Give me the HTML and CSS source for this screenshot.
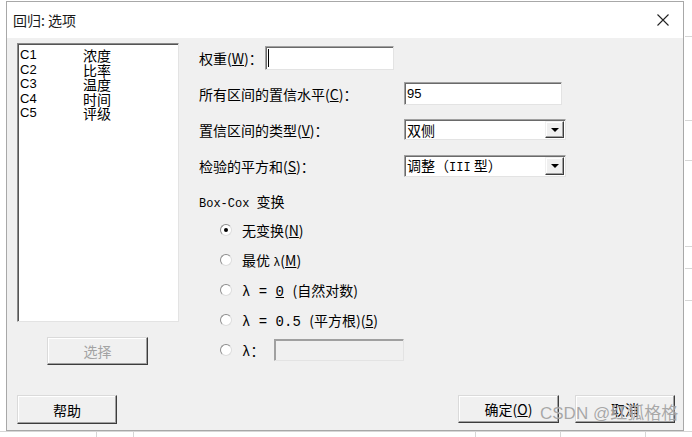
FILE: index.html
```html
<!DOCTYPE html>
<html lang="zh">
<head>
<meta charset="utf-8">
<title>回归: 选项</title>
<link rel="stylesheet" href="styles.css">
</head>
<body>
<div class="desk">
  <span class="hl hl-bottom"></span>
  <span class="vl vl-a"></span>
  <span class="vl vl-b"></span>
  <span class="vl vl-c"></span>
  <span class="vl vl-d"></span>
  <span class="vl vl-e"></span>
  <span class="rl rl-1"></span>
  <span class="rl rl-2"></span>
  <span class="rl rl-3"></span>
  <span class="rl rl-4"></span>
  <span class="rl rl-5"></span>
  <span class="rl rl-6"></span>
</div>
<div class="dialog">
  <div class="titlebar">
    <span class="title">回归: 选项</span>
    <svg class="close" width="12" height="12" viewBox="0 0 12 12"><path d="M0.5 0.5 L11.5 11.5 M11.5 0.5 L0.5 11.5" stroke="#222" stroke-width="1.1" fill="none"/></svg>
  </div>
  <div class="main">
    <div class="left">
      <div class="listbox">
        <div class="item"><span class="code">C1</span><span>浓度</span></div>
        <div class="item"><span class="code">C2</span><span>比率</span></div>
        <div class="item"><span class="code">C3</span><span>温度</span></div>
        <div class="item"><span class="code">C4</span><span>时间</span></div>
        <div class="item"><span class="code">C5</span><span>评级</span></div>
      </div>
      <button class="btn btn-select" disabled>选择</button>
      <button class="btn btn-help">帮助</button>
    </div>
    <div class="right">
      <div class="row r1">
        <span class="lbl-w">权重(<u>W</u>)：</span>
        <div class="field f-weight"></div>
      </div>
      <div class="row r2">
        <span class="lbl">所有区间的置信水平(<u>C</u>)：</span>
        <div class="field f-conf">95</div>
      </div>
      <div class="row r3">
        <span class="lbl">置信区间的类型(<u>V</u>)：</span>
        <div class="select"><span class="txt">双侧</span><span class="drop"><i class="tri"></i></span></div>
      </div>
      <div class="row r4">
        <span class="lbl">检验的平方和(<u>S</u>)：</span>
        <div class="select"><span class="txt">调整（<span class="mono">III</span> 型）</span><span class="drop"><i class="tri"></i></span></div>
      </div>
      <div class="boxcox"><span class="mono">Box-Cox </span>变换</div>
      <div class="radios">
        <div class="radio-row"><span class="radio checked"></span><span>无变换(<u>N</u>)</span></div>
        <div class="radio-row"><span class="radio"></span><span>最优 <span class="mono">λ</span>(<u>M</u>)</span></div>
        <div class="radio-row"><span class="radio"></span><span><span class="mono-l">λ = <u>0</u> </span>(自然对数)</span></div>
        <div class="radio-row"><span class="radio"></span><span><span class="mono-l">λ = 0.5 </span>(平方根)(<u>5</u>)</span></div>
        <div class="radio-row"><span class="radio"></span><span><span class="mono-l">λ</span>：</span><div class="field f-lambda"></div></div>
      </div>
      <div class="actions">
        <button class="btn btn-ok">确定(<u>O</u>)</button>
        <button class="btn btn-cancel">取消</button>
      </div>
    </div>
  </div>
</div>
<div class="watermark">CSDN @红狐格格</div>
</body>
</html>
```

FILE: styles.css
```css
* { box-sizing: border-box; }

body {
  margin: 0;
  padding: 1px 0 0 6px;
  width: 692px;
  height: 437px;
  overflow: hidden;
  position: relative;
  background: #fff;
  color: #000;
  font-family: "Noto Sans CJK SC", "Liberation Sans", sans-serif;
  font-size: 14px;
}

u { text-decoration: underline; text-underline-offset: 1px; }

/* background spreadsheet behind the dialog */
.desk span { position: absolute; background: #d6d6d6; }
.hl-bottom { left: 0; top: 431px; width: 692px; height: 1px; }
.vl { top: 431px; width: 1px; height: 6px; }
.vl-a { left: 96px; }
.vl-b { left: 133px; }
.vl-c { left: 475px; }
.vl-d { left: 560px; }
.vl-e { left: 645px; }
.rl { left: 685px; width: 7px; height: 1px; }
.rl-1 { top: 36px; }
.rl-2 { top: 120px; }
.rl-3 { top: 160px; background: #888; }
.rl-4 { top: 246px; }
.rl-5 { top: 268px; background: #888; }
.rl-6 { top: 300px; }

.dialog {
  position: relative;
  width: 678px;
  height: 430px;
  border: 1px solid #a8a8a8;
  background: #f0f0f0;
  display: flex;
  flex-direction: column;
}

.titlebar {
  flex: none;
  height: 36px;
  background: #fff;
  display: flex;
  align-items: center;
  justify-content: space-between;
  padding: 0 14px 0 6px;
}
.title { font-size: 14px; line-height: 16px; color: #1a1a1a; }
.close { display: block; }

.main { flex: 1; display: flex; }

.left {
  width: 172px;
  padding: 5px 0 0 10px;
  display: flex;
  flex-direction: column;
  align-items: flex-start;
}

.listbox {
  width: 162px;
  height: 279px;
  background: #fff;
  border: 1px solid;
  border-color: #8a8a8a #e3e3e3 #e3e3e3 #8a8a8a;
  box-shadow: inset 1px 1px 0 #555;
  padding: 4px 0 0 2px;
}
.item { display: flex; height: 14.5px; line-height: 14.5px; font-size: 14px; }
.code { width: 63px; font-family: "Liberation Sans", sans-serif; font-size: 13px; }

.btn {
  font-family: inherit;
  font-size: 14px;
  color: #000;
  background: #f0f0f0;
  border: 1px solid;
  border-color: #dadada #3c3c3c #3c3c3c #dadada;
  box-shadow: inset -1px -1px 0 #a0a0a0, inset 1px 1px 0 #fff;
  padding: 0;
  line-height: 16px;
}
.btn-select { margin: 15px 0 0 30px; width: 101px; height: 28px; color: #a3a3a3; }
.btn-help { margin-top: 30px; width: 100px; height: 29px; }

.right {
  flex: 1;
  margin-left: 20px;
  padding: 8px 8px 7px 0;
  display: flex;
  flex-direction: column;
}

.row { display: flex; align-items: center; }
.r1 { height: 24px; }
.r2 { margin-top: 12px; height: 23px; }
.r3 { margin-top: 14px; height: 21px; }
.r4 { margin-top: 15px; height: 22px; }
.lbl-w { width: 66px; }
.lbl { width: 205px; }

.field {
  height: 100%;
  background: #fff;
  border: 1px solid;
  border-color: #a0a0a0 #e3e3e3 #e3e3e3 #a0a0a0;
  box-shadow: inset 1px 1px 0 #6a6a6a;
}
.f-weight { width: 129px; position: relative; }
.f-weight::after {
  content: "";
  position: absolute;
  left: 2px;
  top: 2px;
  bottom: 2px;
  width: 1px;
  background: #000;
}
.f-conf {
  width: 158px;
  padding-left: 2px;
  font-family: "Liberation Sans", sans-serif;
  font-size: 13px;
  line-height: 21px;
}

.select {
  width: 162px;
  height: 100%;
  background: #fff;
  border: 1px solid;
  border-color: #a0a0a0 #e3e3e3 #e3e3e3 #a0a0a0;
  box-shadow: inset 1px 1px 0 #6a6a6a;
  display: flex;
  align-items: center;
  padding: 1px 1px 1px 2px;
}
.select .txt { flex: 1; line-height: 16px; }
.drop {
  width: 19px;
  align-self: stretch;
  background: #f0f0f0;
  border: 1px solid;
  border-color: #f0f0f0 #3c3c3c #3c3c3c #f0f0f0;
  box-shadow: inset -1px -1px 0 #a0a0a0, inset 1px 1px 0 #fff;
  display: flex;
  align-items: center;
  justify-content: center;
}
.tri {
  width: 0;
  height: 0;
  border-left: 4px solid transparent;
  border-right: 4px solid transparent;
  border-top: 4px solid #000;
}

.mono { font-family: "Liberation Mono", monospace; font-size: 12px; }
.mono-l { font-family: "Liberation Mono", monospace; font-size: 14px; }

.boxcox { margin-top: 16px; line-height: 16px; }

.radios { margin: 3px 0 0 21px; }
.radio-row { height: 30px; display: flex; align-items: center; gap: 10px; }
.radio {
  flex: none;
  width: 12px;
  height: 12px;
  border-radius: 50%;
  background: #fff;
  border: 1px solid;
  border-color: #8c8c8c #dcdcdc #dcdcdc #8c8c8c;
  position: relative;
}
.radio.checked::after {
  content: "";
  position: absolute;
  left: 3px;
  top: 3px;
  width: 4px;
  height: 4px;
  border-radius: 50%;
  background: #000;
}
.f-lambda { width: 130px; height: 22px; background: #f0f0f0; box-shadow: inset 1px 1px 0 #a0a0a0; }

.actions { margin-top: auto; display: flex; justify-content: flex-end; gap: 16px; }
.btn-ok { width: 101px; height: 28px; }
.btn-cancel { width: 100px; height: 28px; }

.watermark {
  position: absolute;
  left: 540px;
  top: 404px;
  font-size: 17px;
  line-height: 20px;
  color: #a0a0a0;
  font-family: "Liberation Sans", "Noto Sans CJK SC", sans-serif;
  text-shadow: 0 0 1px #fff;
  opacity: 0.9;
}
```
